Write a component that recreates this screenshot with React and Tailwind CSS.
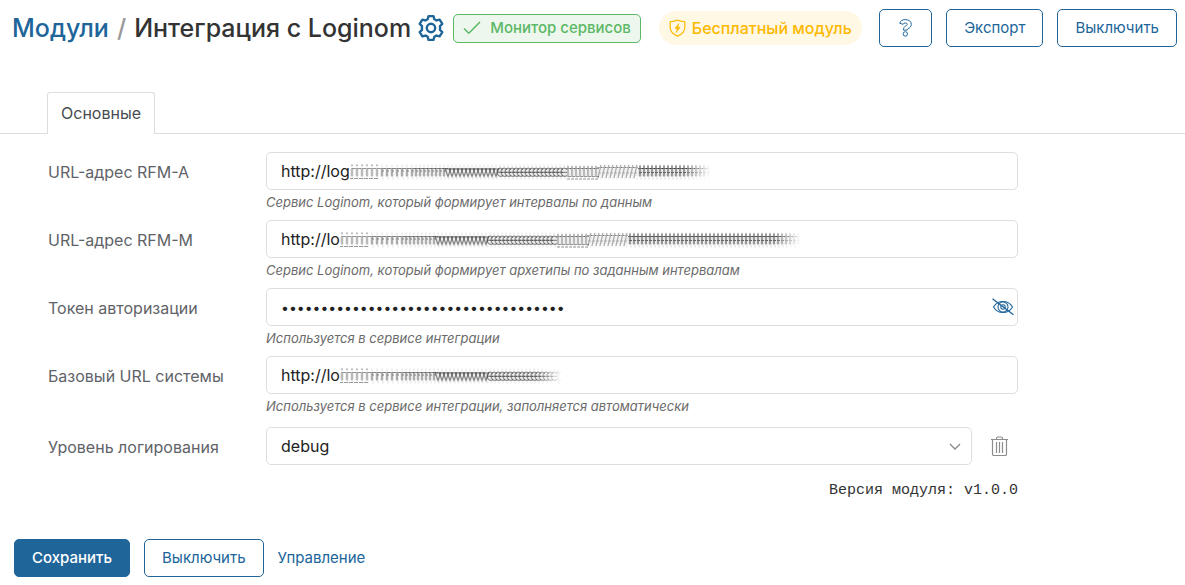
import { useState } from "react";

const BUTTON =
  "flex h-[38px] shrink-0 items-center justify-center whitespace-nowrap rounded-[5px] border border-[#20659a] px-[17px] text-[15px] leading-6";
const OUTLINE = "bg-white text-[#20659a]";
const FIELD =
  "block h-[38px] w-full rounded-[5px] border border-[#dcdee0] bg-white px-[14px] leading-6 text-[#222] outline-none";

function GearIcon() {
  return (
    <svg viewBox="0 0 26 26" className="size-[28px]" fill="none" stroke="currentColor" strokeWidth="2.2" strokeLinejoin="round" aria-hidden="true">
      <path d="M10.7 2h4.6l.8 2.900c.7.300 1.400.700 2 1.100l2.900-.8 2.500 4-2.200 2.100a8 8 0 0 1 0 3.400l2.200 2.100-2.500 4-2.900-.8c-.6.400-1.300.800-2 1.100l-.8 2.900h-4.600l-.8-2.900c-.7-.3-1.400-.7-2-1.100l-2.900.8-2.500-4 2.200-2.100a8 8 0 0 1 0-3.400L2.500 9.200l2.500-4 2.900.8c.6-.4 1.300-.8 2-1.100z" />
      <circle cx="13" cy="13" r="3.900" />
    </svg>
  );
}

function CheckIcon() {
  return (
    <svg viewBox="0 0 18 14" className="h-[14px] w-[18px]" fill="none" stroke="currentColor" strokeWidth="1.500" aria-hidden="true">
      <path d="M1 7.500l4.800 4.800L17 1" />
    </svg>
  );
}

function ShieldIcon() {
  return (
    <svg viewBox="0 0 17 18" className="h-[18px] w-[17px]" fill="none" stroke="currentColor" strokeWidth="1.200" strokeLinejoin="round" aria-hidden="true">
      <path d="M8.500 1C6.500 2.200 4 2.600 1.200 2.500v6c0 3.800 3 6.800 7.300 8.600 4.300-1.800 7.300-4.800 7.300-8.600v-6C13 2.600 10.500 2.200 8.500 1z" />
      <path d="M9.800 4.500L6 9.300h2.200L7.300 13.500 11.200 8.200H8.900z" fill="currentColor" strokeWidth=".6" />
    </svg>
  );
}

function QuestionIcon() {
  return (
    <svg viewBox="0 0 13 18" className="h-[18px] w-[13px]" fill="none" stroke="currentColor" strokeWidth="1" strokeLinejoin="round" aria-hidden="true">
      <path d="M.8 4.300C1.300 1.800 3.300.6 6.300.6c3.600 0 6 1.900 6 4.700 0 2-1.200 3.400-3.200 4.300-.7.300-.9.700-.9 1.500H4.500c0-2.200.6-3.300 2.300-4.200 1.100-.6 1.500-.9 1.500-1.600 0-.8-.7-1.300-2-1.300-1.200 0-1.900.4-2.200 1.300z" />
      <circle cx="6.300" cy="14.900" r="2.200" />
    </svg>
  );
}

function HiddenEyeIcon() {
  return (
    <svg viewBox="0 0 22 18" className="h-[18px] w-[22px]" fill="none" stroke="currentColor" strokeWidth="1.100" aria-hidden="true">
      <path d="M1.500 9C3.500 5.500 7 3.500 11 3.500S18.500 5.500 20.500 9c-2 3.500-5.500 5.500-9.500 5.500S3.500 12.500 1.500 9z" />
      <circle cx="11" cy="9" r="5" />
      <circle cx="11" cy="9" r="2.200" />
      <path d="M.5.8l21 16" strokeWidth="1.300" />
    </svg>
  );
}

function TrashIcon() {
  return (
    <svg viewBox="0 0 17 20" className="h-[20px] w-[17px]" fill="none" stroke="currentColor" strokeWidth="1.200" aria-hidden="true">
      <path d="M0 3.500h17M5.500 3.500v-1c0-.8.500-1.500 1.500-1.500h3c1 0 1.500.700 1.500 1.500v1M1.500 3.500V18c0 .8.500 1.500 1.500 1.500h11c1 0 1.500-.7 1.500-1.500V3.500M5.500 6v11M8.500 6v11M11.500 6v11" />
    </svg>
  );
}

const BANDS = [
  { to: 30, opacity: 0.5, mark: "M0 5v8.500M0 5.500h4M0 1.500v1.500M-3 15.500h4" },
  { to: 95, opacity: 0.6, mark: "M0 5v8.500M0 5.500h4M0 8h2" },
  { to: 150, opacity: 0.6, mark: "M-3 5l3 8.500 3-8.500M-3 6h6" },
  { to: 215, opacity: 0.55, mark: "M3 6.500C0 3.500-3 6-3 9s3 6 6 3.500M-3 9.300h6" },
  { to: 250, opacity: 0.5, mark: "M0 3v10.500h3M-2 5.500h5M-1 16h3" },
  { to: 290, opacity: 0.4, mark: "M1 2l-3 13M-3 4.500h5M-2 10h3" },
  { to: 500, opacity: 0.75, mark: "M0 2.500v11M-2 5.500h5M-1 9.500h3" },
];

function Smear({ width }) {
  const strokes = [];
  let x = 2;
  while (x < width) {
    const band = BANDS.find((b) => x < b.to);
    const tail = Math.min(1, (width - x) / 26);
    strokes.push({ x, mark: band.mark, o: band.opacity * tail });
    x += x < 60 ? 5 : 4;
  }
  return (
    <svg width={width} height="18" viewBox={`0 0 ${width} 18`} fill="none" stroke="#333" aria-hidden="true">
      {strokes.map(({ x: left, mark, o }) => (
        <g key={left} transform={`translate(${left} 0)`} opacity={o}>
          <path d="M-2 9.300h4" strokeWidth="8" opacity=".16" />
          <path d={mark} strokeWidth="1.200" />
          <path d="M0 1.500v3M1 14v2.500" strokeWidth="1.200" opacity=".2" />
        </g>
      ))}
    </svg>
  );
}

function Row({ id, label, help, children }) {
  return (
    <div className="flex">
      <label htmlFor={id} className="w-[218px] shrink-0 pt-[8px] text-[16px] leading-6 text-[#5f6368]">
        {label}
      </label>
      <div className="min-w-0 flex-1">
        {children}
        {help && <p className="h-[30px] pt-[2px] text-[13px] italic leading-5 text-[#6b6b6b]">{help}</p>}
      </div>
    </div>
  );
}

function AddressField({ id, value, smear, offset }) {
  return (
    <div className="relative">
      <input id={id} type="text" defaultValue={value} className={`${FIELD} text-[16px]`} />
      <div className={`pointer-events-none absolute top-[11px] ${offset}`}>
        <Smear width={smear} />
      </div>
    </div>
  );
}

export default function App() {
  const [shown, setShown] = useState(false);
  return (
    <div className="bg-white pb-2 font-['Inter','Liberation_Sans',sans-serif]">
      <header className="flex h-[56px] items-center pl-3 pr-2">
        <h1 className="flex shrink-0 items-center whitespace-nowrap text-[25px] font-medium leading-8 text-[#333]">
          <a href="#modules" className="text-[#20659a]">Модули</a>
          <span className="px-[8px] text-[#999]">/</span>
          Интеграция с Loginom
        </h1>
        <button type="button" aria-label="Настройки" className="ml-[6px] shrink-0 text-[#20659a]">
          <GearIcon />
        </button>
        <a href="#monitor" className="ml-[8px] flex h-[29px] shrink-0 items-center gap-[9px] whitespace-nowrap rounded-[5px] border border-[#5cb865] bg-[#edf7ee] px-[9px] text-[15px] font-medium leading-6 text-[#5cb865]">
          <CheckIcon />
          Монитор сервисов
        </a>
        <span className="ml-[18px] flex h-[34px] shrink-0 items-center gap-[6px] whitespace-nowrap rounded-full bg-[#fff8e5] px-[10px] text-[16px] font-medium leading-6 text-[#fcb900]">
          <ShieldIcon />
          Бесплатный модуль
        </span>
        <div className="ml-auto flex gap-[14px]">
          <button type="button" aria-label="Справка" className={`${BUTTON} ${OUTLINE} w-[53px]`}>
            <QuestionIcon />
          </button>
          <button type="button" className={`${BUTTON} ${OUTLINE}`}>Экспорт</button>
          <button type="button" className={`${BUTTON} ${OUTLINE}`}>Выключить</button>
        </div>
      </header>

      <nav className="mt-[36px] flex border-b border-[#dcdee0] pl-[47px]">
        <a href="#main" aria-current="page" className="-mb-px flex h-[42px] items-center rounded-t-[3px] border border-b-0 border-[#dcdee0] bg-white px-[13px] pb-[2px] text-[16px] leading-6 text-[#484c50]">
          Основные
        </a>
      </nav>

      <form className="max-w-[1018px] pl-[48px] pt-[18px]">
        <Row id="rfm-a" label="URL-адрес RFM-A" help="Сервис Loginom, который формирует интервалы по данным">
          <AddressField id="rfm-a" value="http://log" smear={360} offset="left-[84px]" />
        </Row>
        <Row id="rfm-m" label="URL-адрес RFM-M" help="Сервис Loginom, который формирует архетипы по заданным интервалам">
          <AddressField id="rfm-m" value="http://lo" smear={460} offset="left-[74px]" />
        </Row>
        <Row id="token" label="Токен авторизации" help="Используется в сервисе интеграции">
          <div className="relative">
            <input id="token" type={shown ? "text" : "password"} defaultValue={"0".repeat(36)} className={`${FIELD} text-[14px]`} />
            <button type="button" aria-label="Показать токен" onClick={() => setShown(!shown)} className="absolute right-1 top-[10px] text-[#20659a]">
              <HiddenEyeIcon />
            </button>
          </div>
        </Row>
        <Row id="base-url" label="Базовый URL системы" help="Используется в сервисе интеграции, заполняется автоматически">
          <AddressField id="base-url" value="http://lo" smear={222} offset="left-[74px]" />
        </Row>
        <div className="mt-[3px]">
          <Row id="log-level" label="Уровень логирования">
            <div className="flex items-center">
              <div className="relative flex-1">
                <select id="log-level" defaultValue="debug" className={`${FIELD} appearance-none text-[16px]`}>
                  <option>debug</option>
                </select>
                <svg viewBox="0 0 12 8" className="pointer-events-none absolute right-[11px] top-[16px] h-[8px] w-[12px]" fill="none" stroke="#888" strokeWidth="1.300" aria-hidden="true">
                  <path d="M1 1l5 5 5-5" />
                </svg>
              </div>
              <button type="button" aria-label="Удалить" className="ml-[19px] mr-[10px] text-[#8c8c8c]">
                <TrashIcon />
              </button>
            </div>
          </Row>
        </div>
        <p className="mt-[16px] text-right font-['Liberation_Mono',monospace] text-[15px] leading-5 text-[#333]">Версия модуля: v1.0.0</p>
      </form>

      <footer className="mt-[38px] flex items-center gap-[14px] pl-[14px]">
        <button type="button" className={`${BUTTON} bg-[#20659a] font-medium text-white`}>Сохранить</button>
        <button type="button" className={`${BUTTON} ${OUTLINE}`}>Выключить</button>
        <a href="#manage" className="text-[15px] leading-6 text-[#20659a]">Управление</a>
      </footer>
    </div>
  );
}
